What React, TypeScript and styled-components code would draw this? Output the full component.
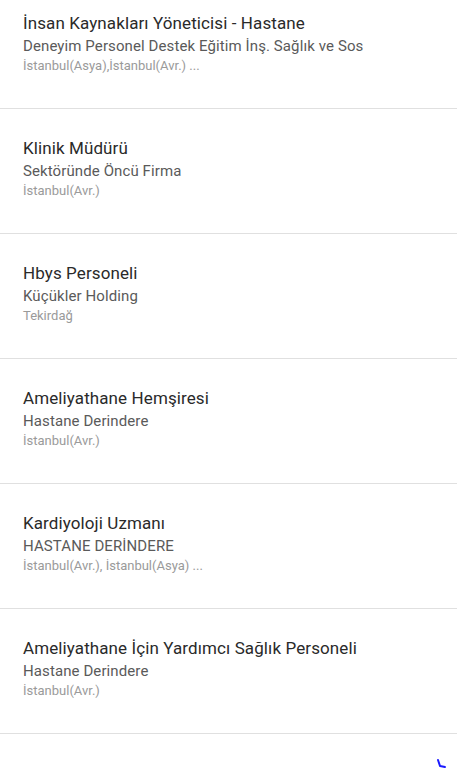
import React from "react";
import styled, { createGlobalStyle } from "styled-components";

const Global = createGlobalStyle`
  html, body { margin: 0; padding: 0; background: #fff; }
  body { font-family: Roboto, "Noto Sans", "Liberation Sans", sans-serif; -webkit-font-smoothing: antialiased; overflow: hidden; }
`;

const List = styled.ul`
  list-style: none;
  margin: 0;
  padding: 0;
  display: flex;
  flex-direction: column;
`;

const Row = styled.li<{ $first?: boolean }>`
  display: flex;
  flex-direction: column;
  padding: ${(p) => (p.$first ? "11px" : "27px")} 16px 33px 23px;
  border-bottom: 1px solid #e0e0e0;
`;

const Title = styled.div`
  font-size: 17px;
  line-height: 24px;
  letter-spacing: 0.1px;
  color: #2a2a2a;
  white-space: nowrap;
`;

const Company = styled.div`
  font-size: 15px;
  line-height: 22px;
  letter-spacing: 0.1px;
  color: #5a5a5a;
  white-space: nowrap;
`;

const Location = styled.div`
  font-size: 13px;
  line-height: 18px;
  color: #9a9a9a;
  white-space: nowrap;
`;

const Spinner = styled.svg`
  position: fixed;
  left: 433px;
  top: 757px;
  width: 16px;
  height: 16px;
`;

const jobs = [
  { t: "İnsan Kaynakları Yöneticisi - Hastane", c: "Deneyim Personel Destek Eğitim İnş. Sağlık ve Sos", l: "İstanbul(Asya),İstanbul(Avr.) ..." },
  { t: "Klinik Müdürü", c: "Sektöründe Öncü Firma", l: "İstanbul(Avr.)" },
  { t: "Hbys Personeli", c: "Küçükler Holding", l: "Tekirdağ" },
  { t: "Ameliyathane Hemşiresi", c: "Hastane Derindere", l: "İstanbul(Avr.)" },
  { t: "Kardiyoloji Uzmanı", c: "HASTANE DERİNDERE", l: "İstanbul(Avr.), İstanbul(Asya) ..." },
  { t: "Ameliyathane İçin Yardımcı Sağlık Personeli", c: "Hastane Derindere", l: "İstanbul(Avr.)" },
];

export default function App() {
  return (
    <>
      <Global />
      <List>
        {jobs.map((j, i) => (
          <Row key={i} $first={i === 0}>
            <Title>{j.t}</Title>
            <Company>{j.c}</Company>
            <Location>{j.l}</Location>
          </Row>
        ))}
      </List>
      <Spinner viewBox="0 0 16 16">
        <path d="M5 3 L7 9 L12 10" fill="none" stroke="#1a1aff" strokeWidth="2" strokeLinecap="round" strokeLinejoin="round" />
      </Spinner>
    </>
  );
}
